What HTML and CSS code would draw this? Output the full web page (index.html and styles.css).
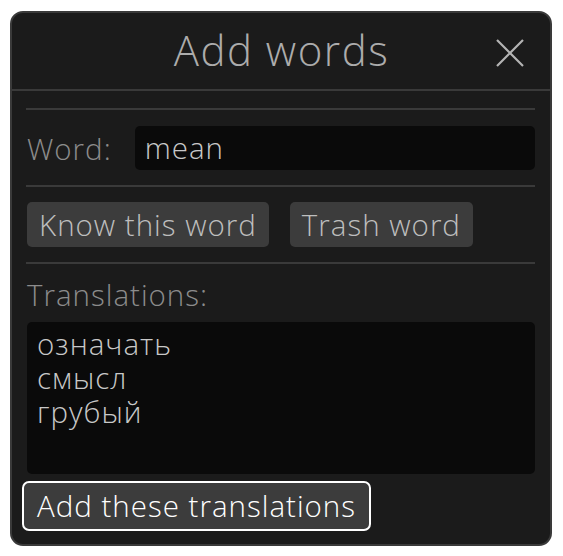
FILE: index.html
```html
<!DOCTYPE html>
<html>
<head>
<meta charset="utf-8">
<link rel="stylesheet" href="styles.css">
</head>
<body>
<div class="window">
  <div class="titlebar">
    <span class="title">Add words</span>
    <span class="close">
      <svg width="28" height="28" viewBox="0 0 28 28"><path d="M1 1 L27 27 M27 1 L1 27" stroke="#b4b4b4" stroke-width="2.2" fill="none"/></svg>
    </span>
  </div>
  <div class="content">
    <div class="sep first"></div>
    <div class="row">
      <span class="label">Word:</span>
      <div class="input">mean</div>
    </div>
    <div class="sep"></div>
    <div class="row buttons">
      <button class="btn">Know this word</button>
      <button class="btn">Trash word</button>
    </div>
    <div class="sep"></div>
    <div class="label tlabel">Translations:</div>
    <div class="textarea">
      <div class="line">означать</div>
      <div class="line">смысл</div>
      <div class="line">грубый</div>
    </div>
    <button class="btn focus">Add these translations</button>
  </div>
</div>
</body>
</html>
```

FILE: styles.css
```css
html, body {
  margin: 0;
  padding: 0;
  background: #ffffff;
}
body {
  padding: 11px 11px 10px 10px;
  font-family: "Open Sans", "Noto Sans", sans-serif;
  font-weight: 300;
}
.window {
  box-sizing: border-box;
  width: 542px;
  height: 535px;
  background: #1b1b1b;
  border: 2px solid #3a3a3a;
  border-radius: 13px;
  display: flex;
  flex-direction: column;
}
.titlebar {
  position: relative;
  height: 76px;
  border-bottom: 2px solid #3a3a3a;
  display: flex;
  align-items: center;
  justify-content: center;
}
.title {
  font-size: 42px;
  letter-spacing: 1.5px;
  color: #acacac;
  line-height: 1;
  margin-top: -2px;
  margin-left: 1px;
}
.close {
  position: absolute;
  right: 26px;
  top: 26px;
  width: 28px;
  height: 28px;
  display: block;
}
.close svg { display: block; }
.content {
  padding: 0 15px 0 14px;
  display: flex;
  flex-direction: column;
  font-size: 29.5px;
  letter-spacing: 1px;
}
.sep {
  height: 2px;
  background: #3a3a3a;
  margin: 15px 0 15px 0;
}
.sep.first { margin-top: 17px; margin-bottom: 16px; }
.row {
  display: flex;
  align-items: center;
}
.label {
  color: #8c8c8c;
  padding-left: 1px;
}
.input {
  margin-left: 23px;
  flex: 1;
  height: 44px;
  box-sizing: border-box;
  background: #0a0a0a;
  border-radius: 5px;
  padding-left: 10px;
  color: #c8c8c8;
  line-height: 44px;
}
.buttons { gap: 20px; margin-top: 0; }
.btn {
  font-family: inherit;
  font-weight: 300;
  font-size: inherit;
  letter-spacing: inherit;
  color: #bebebe;
  background: #3c3c3c;
  border: none;
  border-radius: 5px;
  height: 45px;
  padding: 0 12px;
  margin: 0 0 0 1px;
  line-height: 45px;
}
.tlabel {
  margin-top: -2px;
  line-height: 36px;
}
.textarea {
  margin-top: 9px;
  height: 152px;
  box-sizing: border-box;
  background: #0a0a0a;
  border-radius: 5px;
  padding: 5px 10px;
  color: #c8c8c8;
  margin-left: 1px;
}
.line {
  height: 34px;
  line-height: 34px;
}
.btn.focus {
  align-self: flex-start;
  margin-top: 7px;
  margin-left: -4px;
  height: 50px;
  border: 2px solid #ffffff;
  border-radius: 7px;
  padding: 0 13px;
  line-height: 46px;
  color: #ffffff;
}
```
